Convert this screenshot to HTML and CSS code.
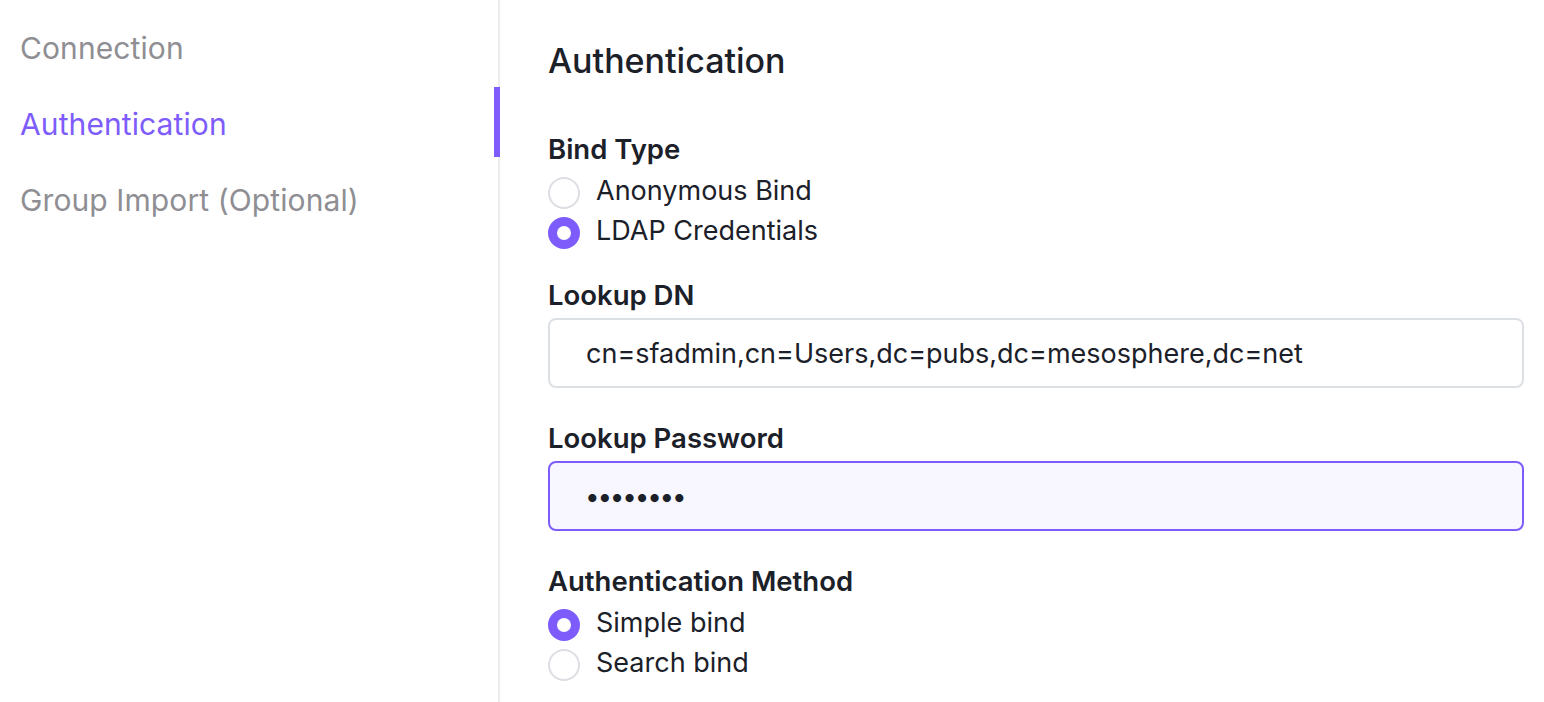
FILE: index.html
```html
<!DOCTYPE html>
<html lang="en">
<head>
<meta charset="utf-8">
<title>Authentication</title>
<link rel="stylesheet" href="styles.css">
</head>
<body>
<div class="layout">
  <nav class="sidebar">
    <a class="nav-item">Connection</a>
    <a class="nav-item active">Authentication</a>
    <a class="nav-item">Group Import (Optional)</a>
  </nav>
  <main class="content">
    <h1 class="title">Authentication</h1>
    <div class="field field-radio">
      <div class="label">Bind Type</div>
      <div class="radio-group">
        <label class="radio"><span class="dot"></span><span>Anonymous Bind</span></label>
        <label class="radio"><span class="dot checked"></span><span>LDAP Credentials</span></label>
      </div>
    </div>
    <div class="field field-input">
      <div class="label">Lookup DN</div>
      <div class="input">cn=sfadmin,cn=Users,dc=pubs,dc=mesosphere,dc=net</div>
    </div>
    <div class="field field-input">
      <div class="label">Lookup Password</div>
      <div class="input focused"><span class="pw">••••••••</span></div>
    </div>
    <div class="field field-radio">
      <div class="label">Authentication Method</div>
      <div class="radio-group">
        <label class="radio"><span class="dot checked"></span><span>Simple bind</span></label>
        <label class="radio"><span class="dot"></span><span>Search bind</span></label>
      </div>
    </div>
  </main>
</div>
</body>
</html>
```
FILE: styles.css
```css
* { box-sizing: border-box; }
html, body { margin: 0; padding: 0; background: #fff; }
body {
  font-family: Inter, "Noto Sans", sans-serif;
  color: #1b2029;
  height: 702px;
  overflow: hidden;
}
.layout { display: flex; height: 702px; }
.sidebar {
  width: 500px;
  flex: none;
  border-right: 2px solid #ececee;
  display: flex;
  flex-direction: column;
  padding-top: 10px;
}
.nav-item {
  position: relative;
  display: block;
  padding: 0 20px;
  height: 76px;
  line-height: 76px;
  font-size: 30px;
  letter-spacing: 0.1px;
  color: #8e8e93;
}
.nav-item.active { color: #7d5cfb; }
.nav-item.active::after {
  content: "";
  position: absolute;
  right: -2px;
  top: 1px;
  width: 6px;
  height: 70px;
  background: #7d5cfb;
}
.content {
  flex: 1;
  padding: 0 20px 0 48px;
}
.title {
  margin: 0;
  padding-top: 41px;
  font-size: 34px;
  font-weight: 500;
  line-height: 40px;
  margin-bottom: 51px;
}
.field-radio { margin-bottom: 28px; }
.field-radio .label { margin-bottom: 4px; }
.field-input { margin-bottom: 33px; }
.label {
  font-size: 27.5px;
  font-weight: 600;
  line-height: 34px;
  margin-bottom: 6px;
}
.radio-group { display: flex; flex-direction: column; }
.radio {
  display: flex;
  align-items: center;
  gap: 16px;
  height: 40px;
  font-size: 27px;
}
.dot {
  width: 32px;
  height: 32px;
  border-radius: 50%;
  border: 2px solid #dcdee3;
  flex: none;
  margin-top: 5px;
}
.dot.checked {
  border: 9px solid #7d5cfb;
  background: #fff;
}
.input {
  height: 70px;
  border: 2px solid #dcdfe4;
  border-radius: 8px;
  padding: 0 36px;
  display: flex;
  align-items: center;
  font-size: 27px;
}
.input.focused {
  border-color: #7d5cfb;
  background: #f8f7ff;
}
.pw { letter-spacing: -2.2px; font-size: 26px; margin-left: -1px; }
```
